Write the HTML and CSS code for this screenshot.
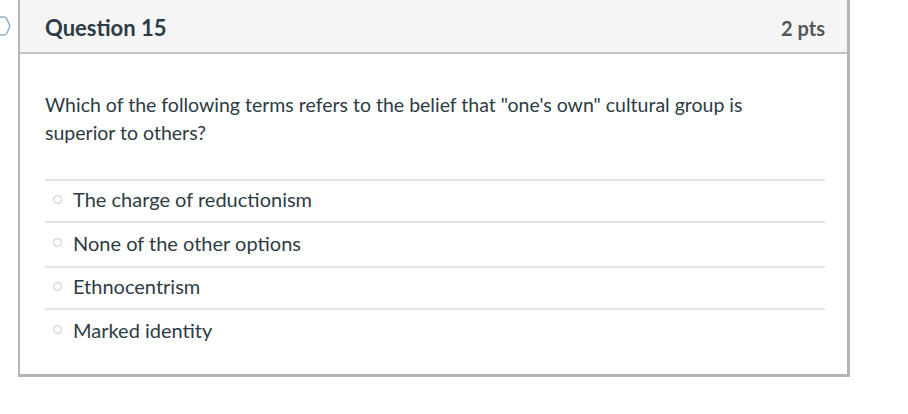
FILE: index.html
```html
<!DOCTYPE html>
<html>
<head>
<meta charset="utf-8">
<link rel="stylesheet" href="styles.css">
</head>
<body>
<div class="page">
  <svg class="flag" width="12" height="22" viewBox="0 0 12 22">
    <path d="M-6 2 H4 Q6 2 7 4 L9.3 9.5 Q10 11 9.3 12.5 L7 18 Q6 20 4 20 H-6" fill="none" stroke="#94b3c8" stroke-width="1.6"/>
  </svg>
  <div class="card">
    <div class="header">
      <span class="title">Question 15</span>
      <span class="pts">2 pts</span>
    </div>
    <div class="body">
      <p class="text">Which of the following terms refers to the belief that "one's own" cultural group is superior to others?</p>
      <div class="answers">
        <div class="answer"><span class="radio"></span><span>The charge of reductionism</span></div>
        <div class="answer tall"><span class="radio"></span><span>None of the other options</span></div>
        <div class="answer"><span class="radio"></span><span>Ethnocentrism</span></div>
        <div class="answer tall"><span class="radio"></span><span>Marked identity</span></div>
      </div>
    </div>
  </div>
</div>
</body>
</html>
```
FILE: styles.css
```css
html, body {
  margin: 0;
  padding: 0;
  background: #ffffff;
}
body {
  font-family: Lato, "Noto Sans", sans-serif;
  color: #2d3b45;
}
.page {
  position: relative;
  width: 908px;
  height: 414px;
  overflow: hidden;
}
.flag {
  position: absolute;
  left: 0;
  top: 15px;
}
.card {
  position: absolute;
  left: 18px;
  top: -2px;
  width: 827px;
  border: 1px solid #c4c4c4;
  border-right: 3px solid #b5b5b5;
  border-bottom: 3px solid #b5b5b5;
  border-left: 2px solid #b5b5b5;
  background: #fff;
}
.header {
  display: flex;
  justify-content: space-between;
  align-items: center;
  padding: 4px 22px 0 25px;
  background: #f5f5f5;
  border-bottom: 2px solid #c4c4c4;
  box-sizing: border-box;
  height: 55px;
}
.title {
  font-size: 22px;
  font-weight: 700;
  color: #2d3b45;
}
.pts {
  font-size: 20px;
  font-weight: 700;
  color: #555;
}
.body {
  padding: 37px 22px 21px 25px;
}
.text {
  margin: 0;
  font-size: 19.5px;
  line-height: 28px;
  max-width: 745px;
}
.answers {
  margin-top: 32px;
}
.answer {
  display: flex;
  align-items: center;
  border-top: 2px solid #e4e4e4;
  font-size: 20px;
  box-sizing: border-box;
  height: 42px;
  padding-bottom: 4px;
}
.answer.tall {
  height: 45px;
}
.radio {
  width: 7px;
  height: 7px;
  border: 1px solid #c8c8c8;
  border-radius: 50%;
  margin: 0 11px 0 8px;
  flex: none;
}
```
